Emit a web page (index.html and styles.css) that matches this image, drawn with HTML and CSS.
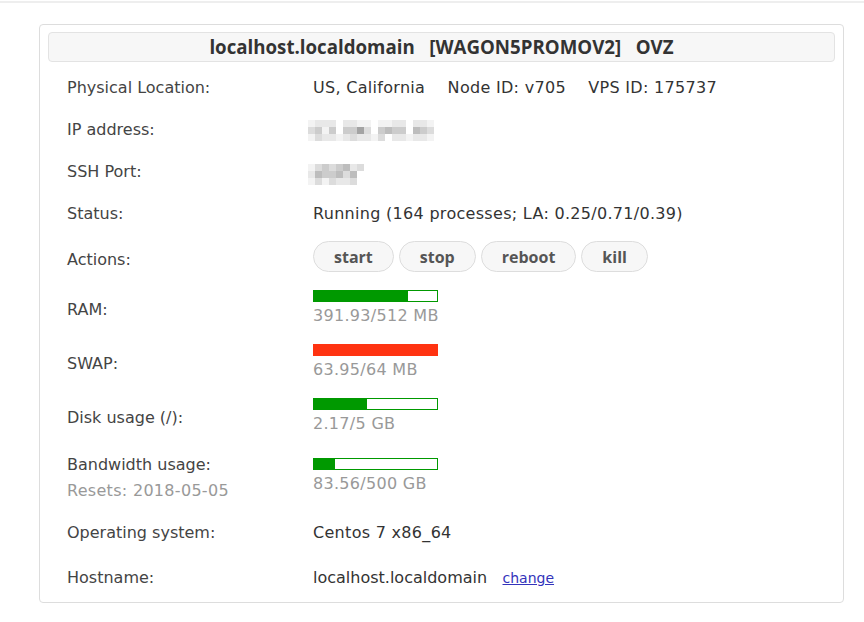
FILE: index.html
```html
<!DOCTYPE html>
<html>
<head>
<meta charset="utf-8">
<link rel="stylesheet" href="styles.css">
</head>
<body>
<div class="topline"></div>
<div class="card">
  <div class="card-head">localhost.localdomain &nbsp; [WAGON5PROMOV2] &nbsp; OVZ</div>
  <table class="info">
    <tr class="r-text">
      <td class="lbl">Physical Location:</td>
      <td class="val">US, California <span class="sp"></span>Node ID: v705 <span class="sp"></span>VPS ID: 175737</td>
    </tr>
    <tr class="r-text">
      <td class="lbl">IP address:</td>
      <td class="val">
        <div class="pix pix-ip">
          <i class="g1"></i><i class="g2"></i><i class="g2"></i><i class="g2"></i><i class="g0"></i><i class="g2"></i><i class="g2"></i><i class="g1"></i><i class="g1"></i><i class="g0"></i><i class="g1"></i><i class="g1"></i><i class="g2"></i><i class="g2"></i><i class="g0"></i><i class="g2"></i><i class="g2"></i><i class="g1"></i>
          <i class="g3"></i><i class="g4"></i><i class="g1"></i><i class="g4"></i><i class="g0"></i><i class="g4"></i><i class="g4"></i><i class="g6"></i><i class="g3"></i><i class="g0"></i><i class="g4"></i><i class="g5"></i><i class="g4"></i><i class="g4"></i><i class="g0"></i><i class="g5"></i><i class="g4"></i><i class="g3"></i>
          <i class="g1"></i><i class="g3"></i><i class="g2"></i><i class="g2"></i><i class="g1"></i><i class="g2"></i><i class="g3"></i><i class="g2"></i><i class="g2"></i><i class="g1"></i><i class="g3"></i><i class="g0"></i><i class="g2"></i><i class="g2"></i><i class="g1"></i><i class="g2"></i><i class="g2"></i><i class="g1"></i>
        </div>
      </td>
    </tr>
    <tr class="r-text">
      <td class="lbl">SSH Port:</td>
      <td class="val">
        <div class="pix pix-port">
          <i class="g1"></i><i class="g3"></i><i class="g4"></i><i class="g3"></i><i class="g4"></i><i class="g5"></i><i class="g2"></i><i class="g3"></i>
          <i class="g2"></i><i class="g5"></i><i class="g4"></i><i class="g4"></i><i class="g5"></i><i class="g3"></i><i class="g5"></i><i class="g0"></i>
          <i class="g1"></i><i class="g3"></i><i class="g1"></i><i class="g3"></i><i class="g2"></i><i class="g2"></i><i class="g3"></i><i class="g0"></i>
        </div>
      </td>
    </tr>
    <tr class="r-text">
      <td class="lbl">Status:</td>
      <td class="val">Running (164 processes; LA: 0.25/0.71/0.39)</td>
    </tr>
    <tr class="r-actions">
      <td class="lbl">Actions:</td>
      <td class="val">
        <div class="btns">
          <button class="btn">start</button>
          <button class="btn">stop</button>
          <button class="btn">reboot</button>
          <button class="btn">kill</button>
        </div>
      </td>
    </tr>
    <tr class="r-bar">
      <td class="lbl">RAM:</td>
      <td class="val">
        <div class="bar"><div class="fill" style="width:76.5%"></div></div>
        <div class="muted">391.93/512 MB</div>
      </td>
    </tr>
    <tr class="r-bar">
      <td class="lbl">SWAP:</td>
      <td class="val">
        <div class="bar bar-red"><div class="fill" style="width:100%"></div></div>
        <div class="muted">63.95/64 MB</div>
      </td>
    </tr>
    <tr class="r-bar">
      <td class="lbl">Disk usage (/):</td>
      <td class="val">
        <div class="bar"><div class="fill" style="width:43.4%"></div></div>
        <div class="muted">2.17/5 GB</div>
      </td>
    </tr>
    <tr class="r-bw">
      <td class="lbl">
        <div class="lbl-line">Bandwidth usage:</div>
        <div class="lbl-line muted resets">Resets: 2018-05-05</div>
      </td>
      <td class="val">
        <div class="bar"><div class="fill" style="width:16.7%"></div></div>
        <div class="muted">83.56/500 GB</div>
      </td>
    </tr>
    <tr class="r-os">
      <td class="lbl">Operating system:</td>
      <td class="val">Centos 7 x86_64</td>
    </tr>
    <tr class="r-host">
      <td class="lbl">Hostname:</td>
      <td class="val"><span class="hostname">localhost.localdomain</span> <a class="change" href="#">change</a></td>
    </tr>
  </table>
</div>
</body>
</html>
```

FILE: styles.css
```css
html, body {
  margin: 0;
  padding: 0;
  background: #ffffff;
}
body {
  font-family: "DejaVu Sans", sans-serif;
  font-size: 16px;
  color: #333333;
}
.topline {
  height: 2px;
  margin-top: 1px;
  background: #eeeeee;
}
.card {
  margin: 21px 20px 0 39px;
  width: 787px;
  border: 1px solid #dddddd;
  border-radius: 4px;
  padding: 7px 8px 1px 8px;
}
.card-head {
  height: 28px;
  line-height: 28px;
  border: 1px solid #e3e3e3;
  border-radius: 4px;
  background: #f7f7f7;
  text-align: center;
  font-family: "Open Sans", sans-serif;
  font-weight: 700;
  font-size: 18.7px;
  color: #333333;
  white-space: pre;
}
.info {
  border-collapse: collapse;
  width: 100%;
  margin-top: 4px;
}
.info td {
  padding: 0;
  vertical-align: middle;
  line-height: 20px;
}
.info td.lbl {
  width: 246px;
  padding-left: 19px;
  color: #444444;
}
.info td.val {
  letter-spacing: 0.3px;
}
.r-text td { padding-top: 12px; padding-bottom: 10px; }
.r-actions td { padding-top: 7px; padding-bottom: 9px; }
.r-actions td.lbl { padding-top: 11px; padding-bottom: 6px; }
.r-bar td { padding-top: 9px; padding-bottom: 9px; }
.r-bar td.lbl { padding-top: 11px; padding-bottom: 7px; }
.r-bw td { padding-top: 10px; padding-bottom: 11px; }
.r-bw td.lbl { padding-top: 12px; padding-bottom: 9px; }
.r-os td { padding-top: 13px; padding-bottom: 11px; }
.r-host td { padding-top: 14px; padding-bottom: 13px; }
.sp {
  display: inline-block;
  width: 17px;
}
.pix {
  display: grid;
  grid-auto-rows: 7px;
  height: 20px;
  margin-left: -5px;
  margin-top: -1px;
}
.pix-ip { grid-template-columns: repeat(18, 7px); }
.pix-port { grid-template-columns: repeat(8, 7px); height: 18px; margin-top: 1px; }
.pix i { display: block; }
.g0 { background: #ffffff; }
.g1 { background: #f3f3f3; }
.g2 { background: #e8e8e8; }
.g3 { background: #dcdcdc; }
.g4 { background: #cccccc; }
.g5 { background: #bdbdbd; }
.g6 { background: #a3a3a3; }
.btns {
  display: flex;
  gap: 5px;
}
.btn {
  height: 31px;
  padding: 0 20px;
  border: 1px solid #dddddd;
  border-radius: 16px;
  background: #f7f7f7;
  font-family: "Open Sans", sans-serif;
  font-weight: 700;
  font-size: 16px;
  letter-spacing: 0;
  color: #555555;
  cursor: pointer;
}
.bar {
  width: 123px;
  height: 10px;
  border: 1px solid #009900;
  background: #ffffff;
  margin-bottom: 4px;
}
.bar .fill {
  height: 100%;
  background: #009900;
}
.bar-red {
  border-color: #ff3311;
}
.bar-red .fill {
  background: #ff3311;
}
.muted {
  color: #999999;
}
.lbl-line {
  line-height: 20px;
}
.resets {
  margin-top: 6px;
  letter-spacing: 0.3px;
}
.hostname {
  letter-spacing: 0;
}
.change {
  margin-left: 10px;
  font-size: 14px;
  letter-spacing: 0;
  color: #3333bb;
}
```
